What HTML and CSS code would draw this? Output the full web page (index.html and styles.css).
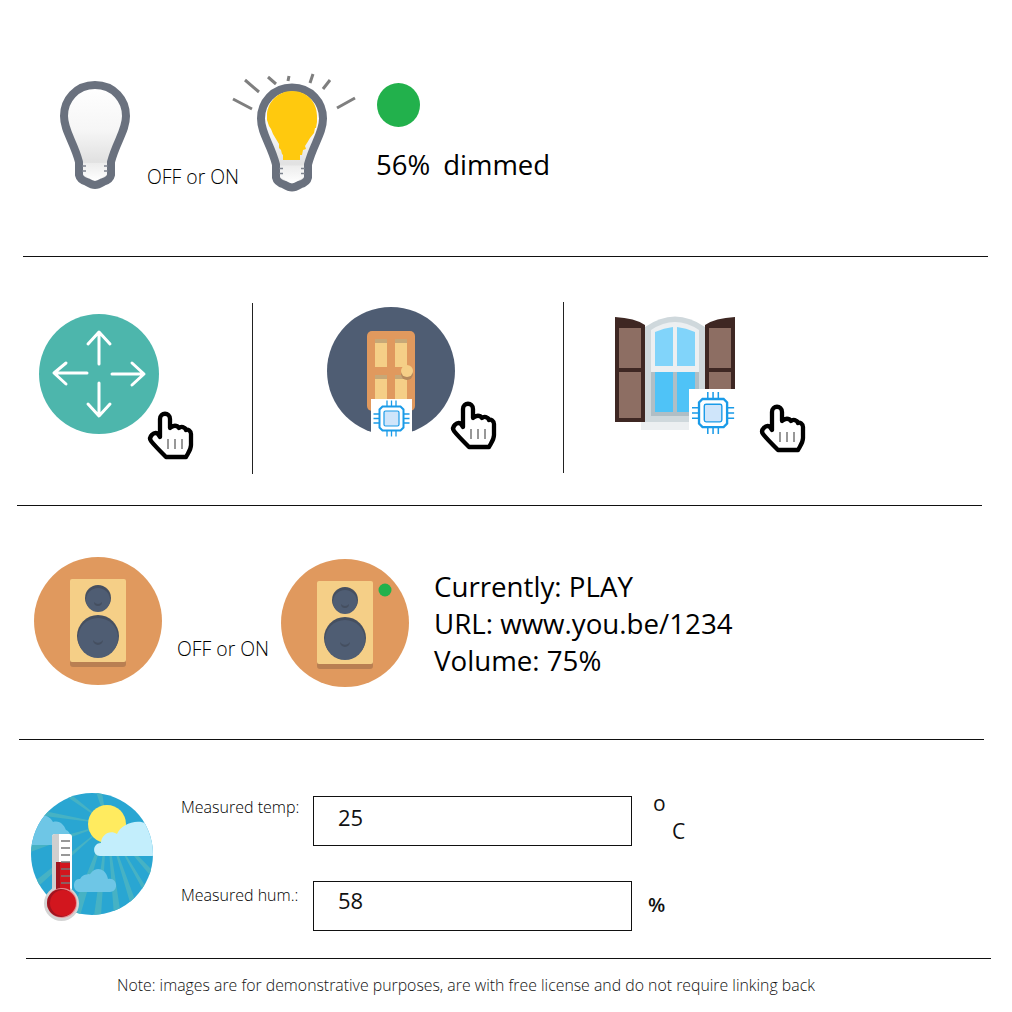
FILE: index.html
```html
<!DOCTYPE html>
<html lang="en">
<head>
<meta charset="utf-8">
<title>Demo</title>
<link rel="stylesheet" href="styles.css">
</head>
<body>
<svg class="sprites" aria-hidden="true">
  <defs>
    <linearGradient id="glass" x1="0" y1="0" x2="0" y2="1">
      <stop offset="0" stop-color="#ffffff"/>
      <stop offset="0.45" stop-color="#f6f6f6"/>
      <stop offset="0.75" stop-color="#e2e2e2"/>
      <stop offset="1" stop-color="#e6e6e6"/>
    </linearGradient>
    <linearGradient id="socket" x1="0" y1="0" x2="0" y2="1">
      <stop offset="0" stop-color="#ececec"/>
      <stop offset="1" stop-color="#ffffff"/>
    </linearGradient>
    <clipPath id="skyclip"><circle cx="92" cy="854" r="61"/></clipPath>
    <g id="bulb">
      <path class="bulb-glass" d="M95 85C114 85 126 100 126 116C126 131 116 142 111 162L111 175Q110 180 103 182Q98 185 95 185Q92 185 87 182Q80 180 79 175L79 162C74 142 64 131 64 116C64 100 76 85 95 85Z"/>
      <path class="bulb-socket" d="M83 163H107V175Q102 177 99 180Q95 182 91 180Q88 177 83 175Z"/>
      <path class="bulb-line" d="M95 85C114 85 126 100 126 116C126 131 116 142 111 162L111 175Q110 180 103 182Q98 185 95 185Q92 185 87 182Q80 180 79 175L79 162C74 142 64 131 64 116C64 100 76 85 95 85Z"/>
      <path class="bulb-notch" d="M82 166H86M82 171H86M104 166H108M104 171H108"/>
    </g>
    <g id="hand">
      <path class="hand-line" d="M12 25L12 7C12 0 22 0 22 7L22 16C25 13 29 13 31 16C33 14 37 15 38 18C40 17 43 19 43 22L43 33C43 38 40 41 38 45L18 45C14 41 6 33 3 29C0 25 6 19 10 22Z"/>
      <path class="hand-marks" d="M20 27V37M27 27V37M34 27V37"/>
    </g>
    <g id="chip">
      <path class="chip-pins" d="M13.500 0V6M18 0V6M22.500 0V6M13.500 30V36M18 30V36M22.500 30V36M0 13.500H6M0 18H6M0 22.500H6M30 13.500H36M30 18H36M30 22.500H36"/>
      <path class="chip-body" d="M9 6H27L30 9V27L27 30H9L6 27V9Z"/>
      <rect class="chip-core" x="10.500" y="10.500" width="15" height="15" rx="1.500"/>
    </g>
    <g id="speaker">
      <circle class="sp-bg" cx="64" cy="64" r="64"/>
      <rect class="sp-shadow" x="36" y="26" width="56" height="84" rx="3"/>
      <rect class="sp-box" x="36" y="22" width="56" height="83" rx="2"/>
      <circle class="sp-cone-top" cx="64" cy="41" r="13"/>
      <circle class="sp-cone" cx="64" cy="43" r="12"/>
      <path class="sp-dimple" d="M60 45a4 4 0 0 0 8 0a5 5 0 0 1 -8 0z"/>
      <circle class="sp-cone-top" cx="64" cy="79" r="21"/>
      <circle class="sp-cone" cx="64" cy="81" r="20"/>
      <path class="sp-dimple" d="M59 83a5 5 0 0 0 10 0a6 6 0 0 1 -10 0z"/>
    </g>
  </defs>
</svg>

<section class="row row-bulbs">
  <svg class="bulb-off" viewBox="58 79 74 112"><use href="#bulb"/></svg>
  <span class="state-label label-bulb">OFF or ON</span>
  <svg class="bulb-on" viewBox="232 72 126 122">
    <use href="#bulb" transform="translate(197 2.500)"/>
    <path class="bulb-fill" d="M292 91C307 91 317 102 317 116L317 122L316 128L315 128L314 133L310 138L307 143L305 146L306 149L303 150L302 155L300 155L300 160H283L283 155L282 154L281 150L279 148L279 144L276 139L273 134L271 129L269 126L267 120L267 114C268 102 278 91 292 91Z"/>
    <path class="rays" d="M233 99L252 109M245 80L259 92M268 77L276 84M289 76L288 81M313 74L310 83M330 80L323 89M355 98L337 108"/>
  </svg>
  <div class="dim-status">
    <span class="led"></span>
    <p class="dim-text"><span>56%</span><span>dimmed</span></p>
  </div>
</section>
<hr class="rule rule-1">

<section class="row row-controls">
  <svg class="ctl-move" viewBox="39 312 156 150">
    <circle class="move-bg" cx="99" cy="374" r="60"/>
    <path class="move-arrows" d="M99 364V333M88 344L99 332L110 344M87 373H55M66 363L54 373L66 384M112 374H143M132 363L144 374L132 385M99 383V415M88 404L99 416L110 404"/>
    <use href="#hand" transform="translate(148 412)"/>
  </svg>
  <span class="divider divider-1"></span>
  <svg class="ctl-door" viewBox="326 306 172 146">
    <circle class="door-bg" cx="391" cy="371" r="64"/>
    <rect class="door-leaf" x="367" y="331" width="48" height="80" rx="5"/>
    <path class="door-panel" d="M375 339H387V367H375ZM395 339H407V367H395ZM375 375H387V405H375ZM395 375H407V405H395Z"/>
    <path class="door-shade" d="M375 339H387V343H375ZM395 339H407V343H395ZM375 375H387V379H375ZM395 375H407V379H395Z"/>
    <circle class="door-knob-shadow" cx="407" cy="374" r="6"/>
    <circle class="door-knob" cx="407" cy="371" r="6"/>
    <rect class="chip-plate" x="371" y="399" width="41" height="36"/>
    <use href="#chip" transform="translate(373.500 400.500)"/>
    <use href="#hand" transform="translate(451 402)"/>
  </svg>
  <span class="divider divider-2"></span>
  <svg class="ctl-window" viewBox="614 316 192 138">
    <rect class="win-sill" x="641" y="420" width="50" height="10"/>
    <path class="win-frame" d="M645 327Q675 306 705 327V422H645Z"/>
    <path class="win-white" d="M651 330Q675 314 699 330V372H651Z"/>
    <rect class="win-grey" x="651" y="372" width="48" height="44"/>
    <path class="win-upper" d="M655 332Q664 328 673 327V366H655ZM677 327Q686 328 695 332V366H677Z"/>
    <path class="win-lower" d="M655 372H673V412H655ZM677 372H695V412H677Z"/>
    <path class="win-shutter" d="M615 317Q635 318 645 325V422H615ZM735 317Q715 318 705 325V422H735Z"/>
    <path class="win-panel" d="M619 328H641V368H619ZM619 372H641V418H619ZM709 328H731V368H709ZM709 372H731V418H709Z"/>
    <rect class="chip-plate" x="689" y="389" width="46" height="42"/>
    <use href="#chip" transform="translate(692 392) scale(1.170)"/>
    <use href="#hand" transform="translate(760 405)"/>
  </svg>
</section>
<hr class="rule rule-2">

<section class="row row-audio">
  <svg class="speaker-off" viewBox="0 0 128 128"><use href="#speaker"/></svg>
  <span class="state-label label-audio">OFF or ON</span>
  <svg class="speaker-on" viewBox="0 0 128 128">
    <use href="#speaker"/>
    <circle class="speaker-led" cx="104" cy="31" r="6.500"/>
  </svg>
  <p class="player">Currently: PLAY<br>URL: www.you.be/1234<br>Volume: 75%</p>
</section>
<hr class="rule rule-3">

<section class="row row-sensors">
  <svg class="weather" viewBox="28 790 128 132">
    <g clip-path="url(#skyclip)">
      <rect class="sky" x="30" y="792" width="124" height="124"/>
      <path class="sky-rays" d="M107 824L60 792L68 792ZM107 824L30 808L30 814ZM107 824L30 845L30 852ZM107 824L30 885L30 894ZM107 824L70 916L80 916ZM107 824L94 916L101 916ZM107 824L114 916L121 916ZM107 824L134 916L141 916ZM107 824L154 900L154 910ZM107 824L154 872L154 880ZM107 824L96 792L102 792Z"/>
      <circle class="sun" cx="107" cy="824" r="19"/>
      <path class="cloud-front" d="M100 856C92 856 92 843 101 843C101 835 110 829 117 834C122 822 146 815 155 832V856Z"/>
      <path class="cloud-back" d="M28 845V825C34 813 48 812 53 822C60 820 64 825 66 830C72 832 73 845 66 845Z"/>
      <path class="cloud-back" d="M80 892C72 892 72 878 80 879C84 872 90 876 91 873C96 866 106 868 108 879C118 877 119 892 110 892Z"/>
    </g>
    <rect class="th-tube" x="52" y="834" width="20" height="70" rx="3"/>
    <path class="th-shade" d="M52 837Q52 834 55 834H59V900H52Z"/>
    <circle class="th-ring" cx="61.500" cy="903.500" r="17.500"/>
    <rect class="th-dark" x="56" y="862" width="14" height="36"/>
    <rect class="th-red" x="60" y="862" width="10" height="36"/>
    <circle class="th-pink" cx="62" cy="903" r="15"/>
    <circle class="th-dark" cx="61" cy="903" r="14"/>
    <circle class="th-red" cx="63" cy="903" r="13"/>
    <path class="th-ticks" d="M61 841H70M61 848H70M61 855H70M61 862H70M61 869H70M61 876H70M61 883H70"/>
  </svg>
  <div class="readings">
    <span class="read-label">Measured temp:</span>
    <div class="read-box">25</div>
    <div class="unit-temp"><span>o</span><span class="unit-c">C</span></div>
    <span class="read-label read-label-low">Measured hum.:</span>
    <div class="read-box read-box-low">58</div>
    <div class="unit-hum">%</div>
  </div>
</section>
<hr class="rule rule-4">

<p class="note">Note: images are for demonstrative purposes, are with free license and do not require linking back</p>
</body>
</html>
```

FILE: styles.css
```css
* { box-sizing: border-box; }

html, body {
  margin: 0;
  background: #fff;
}

body {
  font-family: "Open Sans", sans-serif;
  color: #111;
  overflow: hidden;
  height: 1012px;
}

svg { display: block; flex: none; overflow: visible; }

.sprites { position: absolute; width: 0; height: 0; }

.row { display: flex; align-items: flex-start; }
.row-bulbs { height: 256px; }
.row-controls { height: 248px; }
.row-audio { height: 233px; }
.row-sensors { height: 218px; }

.rule { height: 1px; margin: 0; border: 0; background: #111; }
.rule-1 { margin-left: 23px; width: 965px; }
.rule-2 { margin-left: 17px; width: 965px; }
.rule-3 { margin-left: 19px; width: 965px; }
.rule-4 { margin-left: 26px; width: 965px; }

.state-label {
  flex: none;
  font-size: 19.400px;
  font-weight: 300;
  line-height: 24px;
  white-space: nowrap;
  color: #000;
}

/* bulbs */
.bulb-off { width: 74px; height: 112px; margin: 79px 0 0 58px; }
.label-bulb { width: 85px; margin: 165px 0 0 15px; }
.bulb-on { width: 126px; height: 122px; margin-top: 72px; }
.dim-status { margin: 83px 0 0 19px; }
.led { display: block; width: 43px; height: 44px; border-radius: 50%; background: #22b14c; }
.dim-text {
  display: flex;
  gap: 13px;
  margin: 20px 0 0 -1px;
  font-size: 27.500px;
  line-height: 36px;
  white-space: nowrap;
  color: #000;
}

.bulb-glass { fill: url(#glass); }
.bulb-socket { fill: url(#socket); }
.bulb-line { fill: none; stroke: #6a717e; stroke-width: 8; stroke-linejoin: round; }
.bulb-notch { fill: none; stroke: #7d838e; stroke-width: 1.500; }
.bulb-fill { fill: #ffc90e; }
.rays { fill: none; stroke: #7f7f7f; stroke-width: 3; }

/* hand and chip */
.hand-line { fill: #fff; stroke: #000; stroke-width: 4.300; stroke-linejoin: round; }
.hand-marks { fill: none; stroke: #777; stroke-width: 1.500; }
.chip-plate { fill: #fff; }
.chip-pins { fill: none; stroke: #1a9be8; stroke-width: 1.300; }
.chip-body { fill: #fff; stroke: #1a9be8; stroke-width: 2; }
.chip-core { fill: #cfe5fa; stroke: #1a9be8; stroke-width: 1.200; }

/* controls */
.ctl-move { width: 156px; height: 150px; margin: 55px 0 0 39px; }
.divider { flex: none; width: 1px; height: 171px; background: #222; }
.divider-1 { margin: 46px 0 0 57px; }
.divider-2 { margin: 45px 0 0 0; }
.ctl-door { width: 172px; height: 146px; margin: 49px 65px 0 73px; }
.ctl-window { width: 192px; height: 138px; margin: 59px 0 0 50px; }

.move-bg { fill: #4db6ac; }
.move-arrows { fill: none; stroke: #fff; stroke-width: 3; stroke-linecap: round; stroke-linejoin: round; }

.door-bg { fill: #4f5d73; }
.door-leaf { fill: #e0995e; }
.door-panel { fill: #f5cf87; }
.door-shade { fill: #c7a877; }
.door-knob { fill: #f5cf87; }
.door-knob-shadow { fill: #b5895c; }

.win-sill { fill: #eceff1; }
.win-frame { fill: #cfd8dc; }
.win-white { fill: #eceff1; }
.win-grey { fill: #b0bec5; }
.win-upper { fill: #81d4fa; }
.win-lower { fill: #4fc3f7; }
.win-shutter { fill: #3e2723; }
.win-panel { fill: #8d6e63; }

/* audio */
.speaker-off { width: 128px; height: 128px; margin: 51px 0 0 34px; }
.label-audio { width: 104px; margin: 131px 0 0 15px; }
.speaker-on { width: 128px; height: 128px; margin-top: 53px; }
.player {
  margin: 62px 0 0 25px;
  font-size: 27.700px;
  line-height: 37px;
  white-space: nowrap;
  color: #000;
}

.sp-bg { fill: #e0995e; }
.sp-shadow { fill: #b97f52; }
.sp-box { fill: #f5cf87; }
.sp-cone-top { fill: #454f60; }
.sp-cone { fill: #4f5d73; }
.sp-dimple { fill: #454f60; }
.speaker-led { fill: #22b14c; }

/* sensors */
.weather { width: 128px; height: 132px; margin: 50px 0 0 28px; }
.readings {
  display: grid;
  grid-template-columns: 132px 319px auto;
  grid-auto-rows: 50px;
  row-gap: 35px;
  margin: 56px 0 0 25px;
}
.read-label {
  font-size: 16px;
  font-weight: 300;
  line-height: 22px;
  white-space: nowrap;
  color: #000;
}
.read-label-low { margin-top: 3px; }
.read-box {
  border: 1px solid #111;
  padding: 4px 0 0 24px;
  font-size: 22px;
  line-height: 32px;
}
.read-box-low { padding-top: 2px; }
.unit-temp {
  display: flex;
  flex-direction: column;
  margin-left: 21px;
  font-size: 21px;
  line-height: 28px;
  margin-top: -7px;
}
.unit-c { margin-left: 19px; }
.unit-hum {
  margin: 8px 0 0 16px;
  font-size: 20px;
  font-weight: 600;
  line-height: 32px;
}

.sky { fill: #29a6d2; }
.sky-rays { fill: #46b2c4; }
.sun { fill: #ffeb5f; }
.cloud-front { fill: #c3eefc; }
.cloud-back { fill: #6ec6e6; }
.th-tube { fill: #fff; }
.th-shade { fill: #cfcfcf; }
.th-ring { fill: #d4d4d4; }
.th-pink { fill: #e98a8f; }
.th-dark { fill: #a01520; }
.th-red { fill: #d2161e; }
.th-ticks { fill: none; stroke: #777; stroke-width: 1.500; }

.note {
  margin: 15px 0 0 117px;
  font-size: 15.850px;
  font-weight: 300;
  line-height: 22px;
  white-space: nowrap;
  color: #111;
}
```
